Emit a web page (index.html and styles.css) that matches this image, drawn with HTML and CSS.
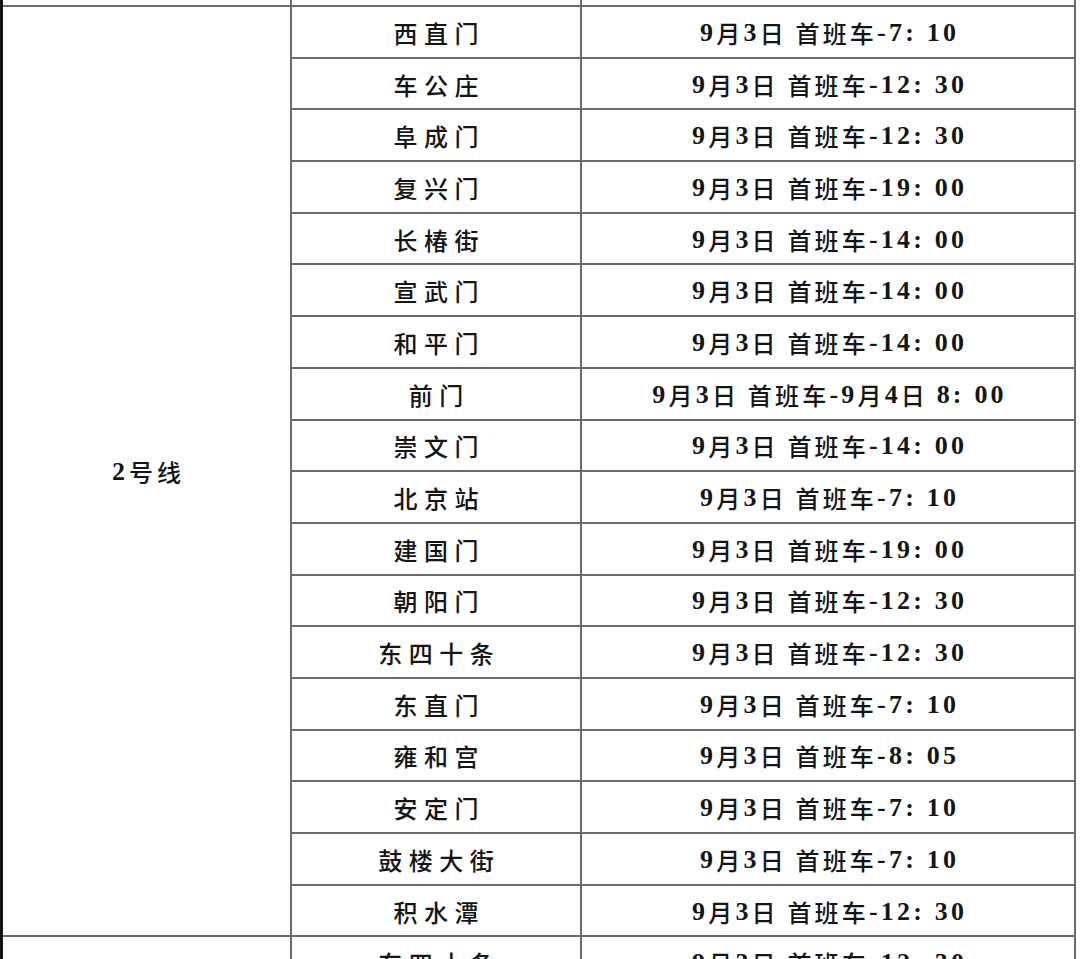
FILE: index.html
```html
<!DOCTYPE html>
<html lang="zh-CN">
<head>
<meta charset="utf-8">
<title>2号线 车站封闭时间</title>
<link rel="stylesheet" href="styles.css">
</head>
<body>
<div class="sheet">
  <div class="cell line-col"></div>
  <div class="cell station"></div>
  <div class="cell time"></div>

  <div class="cell line-col line-span"><span class="n">2</span>号线</div>

  <div class="cell station">西直门</div>
  <div class="cell time"><span class="n">9</span>月<span class="n">3</span>日 首班车<span class="n">-7: 10</span></div>

  <div class="cell station">车公庄</div>
  <div class="cell time"><span class="n">9</span>月<span class="n">3</span>日 首班车<span class="n">-12: 30</span></div>

  <div class="cell station">阜成门</div>
  <div class="cell time"><span class="n">9</span>月<span class="n">3</span>日 首班车<span class="n">-12: 30</span></div>

  <div class="cell station">复兴门</div>
  <div class="cell time"><span class="n">9</span>月<span class="n">3</span>日 首班车<span class="n">-19: 00</span></div>

  <div class="cell station">长椿街</div>
  <div class="cell time"><span class="n">9</span>月<span class="n">3</span>日 首班车<span class="n">-14: 00</span></div>

  <div class="cell station">宣武门</div>
  <div class="cell time"><span class="n">9</span>月<span class="n">3</span>日 首班车<span class="n">-14: 00</span></div>

  <div class="cell station">和平门</div>
  <div class="cell time"><span class="n">9</span>月<span class="n">3</span>日 首班车<span class="n">-14: 00</span></div>

  <div class="cell station">前门</div>
  <div class="cell time"><span class="n">9</span>月<span class="n">3</span>日 首班车<span class="n">-9</span>月<span class="n">4</span>日 <span class="n">8: 00</span></div>

  <div class="cell station">崇文门</div>
  <div class="cell time"><span class="n">9</span>月<span class="n">3</span>日 首班车<span class="n">-14: 00</span></div>

  <div class="cell station">北京站</div>
  <div class="cell time"><span class="n">9</span>月<span class="n">3</span>日 首班车<span class="n">-7: 10</span></div>

  <div class="cell station">建国门</div>
  <div class="cell time"><span class="n">9</span>月<span class="n">3</span>日 首班车<span class="n">-19: 00</span></div>

  <div class="cell station">朝阳门</div>
  <div class="cell time"><span class="n">9</span>月<span class="n">3</span>日 首班车<span class="n">-12: 30</span></div>

  <div class="cell station">东四十条</div>
  <div class="cell time"><span class="n">9</span>月<span class="n">3</span>日 首班车<span class="n">-12: 30</span></div>

  <div class="cell station">东直门</div>
  <div class="cell time"><span class="n">9</span>月<span class="n">3</span>日 首班车<span class="n">-7: 10</span></div>

  <div class="cell station">雍和宫</div>
  <div class="cell time"><span class="n">9</span>月<span class="n">3</span>日 首班车<span class="n">-8: 05</span></div>

  <div class="cell station">安定门</div>
  <div class="cell time"><span class="n">9</span>月<span class="n">3</span>日 首班车<span class="n">-7: 10</span></div>

  <div class="cell station">鼓楼大街</div>
  <div class="cell time"><span class="n">9</span>月<span class="n">3</span>日 首班车<span class="n">-7: 10</span></div>

  <div class="cell station">积水潭</div>
  <div class="cell time"><span class="n">9</span>月<span class="n">3</span>日 首班车<span class="n">-12: 30</span></div>

  <div class="cell line-col"></div>
  <div class="cell station">东四十条</div>
  <div class="cell time"><span class="n">9</span>月<span class="n">3</span>日 首班车<span class="n">-12: 30</span></div>
</div>
</body>
</html>
```

FILE: styles.css
```css
html, body {
  margin: 0;
  padding: 0;
  background: #ffffff;
}

body {
  width: 1080px;
  height: 959px;
  overflow: hidden;
  font-family: "Noto Sans CJK SC", sans-serif;
  color: #151515;
}

.sheet {
  display: grid;
  width: fit-content;
  grid-template-columns: 287px 288px 492px;
  grid-template-rows: 5px;
  grid-auto-rows: 49.7px;
  gap: 2px;
  background: #6b6b6b;
  border-left: 3px solid #111111;
  border-right: 2px solid #6b6b6b;
}

.cell {
  background: #ffffff;
  display: flex;
  align-items: center;
  justify-content: center;
  font-size: 24px;
  font-weight: 500;
  line-height: 1;
  white-space: pre;
  padding-top: 2px;
  box-sizing: border-box;
}

.line-col {
  grid-column: 1;
}

.line-span {
  grid-row: 2 / span 18;
  letter-spacing: 4px;
  padding-left: 4px;
}

.station {
  grid-column: 2;
  letter-spacing: 6.5px;
  padding-left: 6.5px;
}

.time {
  grid-column: 3;
  letter-spacing: 3.2px;
  padding-left: 3.2px;
}

.n {
  font-family: "Liberation Serif", serif;
  font-weight: 700;
  font-size: 26px;
}
```
